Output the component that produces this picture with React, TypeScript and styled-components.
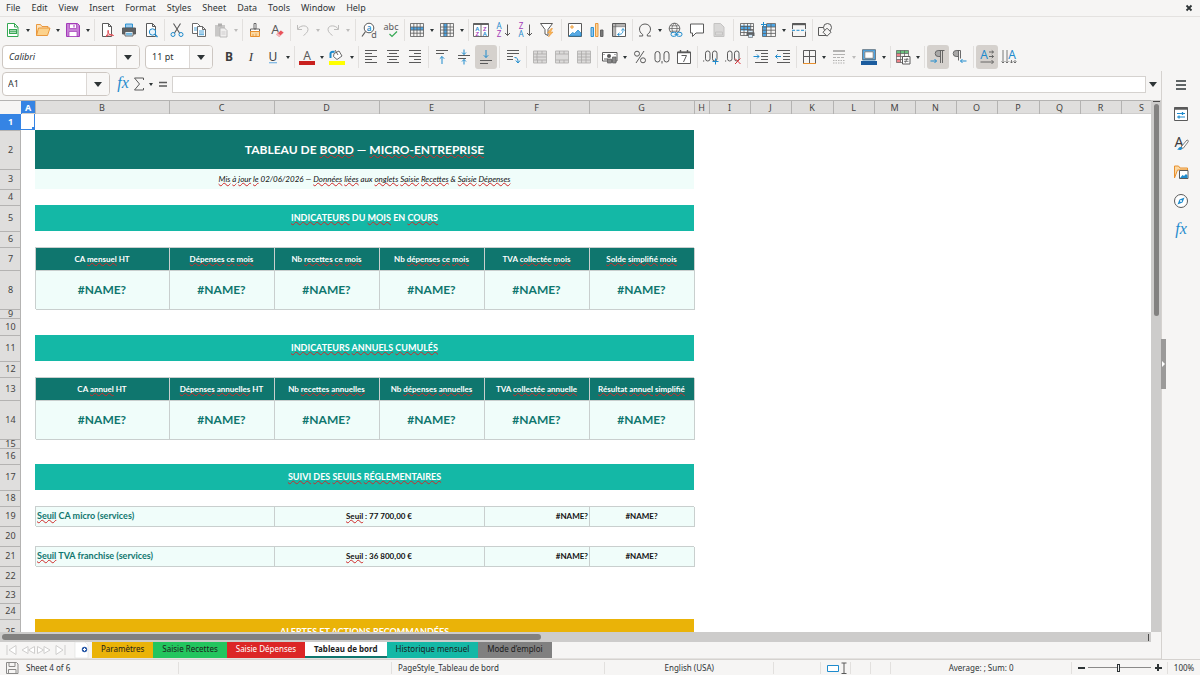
import React, { ReactNode } from "react";
import styled, { createGlobalStyle, css } from "styled-components";

const UI = `"Noto Sans", "Open Sans", sans-serif`;
const CELL = `Lato, "Noto Sans", sans-serif`;
const SERIF = `"Liberation Serif", serif`;

const c = {
  chrome: "#f6f5f4",
  line: "#d5d2cf",
  ink: "#2e3436",
  header: "#dfdedd",
  headerLine: "#b4b3b2",
  blue: "#3584e4",
  iconInk: "#5a5a5a",
  iconBlue: "#1e8bcd",
  teal: "#14b8a6",
  tealDark: "#0f766e",
  mint: "#f0fdfa",
  grid: "#c9cfce",
  amber: "#eab308",
};

const GlobalStyle = createGlobalStyle`
  *, *::before, *::after { box-sizing: border-box; }
  body { margin: 0; background: ${c.chrome}; color: ${c.ink}; font: 9px/12px ${UI}; }
  button, input, select { font: inherit; color: inherit; margin: 0; padding: 0; border: 0; background: none; border-radius: 0; }
  svg { display: block; flex: none; overflow: visible; }
`;

/* ---------- Icons ---------- */

const K = c.iconInk;
const B = c.iconBlue;
const P = "#a33ab8";
const O = "#e8902e";
const page = <path d="M3.5 1.5h6l3 3v10h-9zM9.5 1.5v3h3" fill="#fff" stroke={K} />;
const lines = (ys: number[], x1 = 2, x2 = 14, color = K) =>
  ys.map((y) => <path key={y} d={`M${x1} ${y}H${x2}`} stroke={color} />);
const glyph = (s: string, x: number, y: number, size: number, fill = K, weight = 400, family = UI, style = "normal") => (
  <text x={x} y={y} fontSize={size} fill={fill} fontWeight={weight} style={{ fontFamily: family, fontStyle: style }} textAnchor="middle">
    {s}
  </text>
);
const tableGrid = (
  <path d="M1.5 1.5h13v13h-13zM1.5 5h13M1.5 8h13M1.5 11.2h13M4.8 1.5v13M8 1.5v13M11.2 1.5v13" stroke={K} strokeWidth=".8" />
);
const mergeBase = <path d="M1.5 2h13v12h-13z" fill="#dcdbda" stroke="#b3b2b1" strokeWidth=".9" />;

const icons: Record<string, ReactNode> = {
  new: (
    <>
      <path d="M2.5 1.5h7L13 5v9.500H2.500z" fill="#fff" stroke="#35a853" />
      <path d="M9.500 1.500V5H13" stroke="#35a853" />
      <path d="M4 7h8v5H4z" fill="#35a853" />
      <path d="M5 8.700h6M5 10.400h6" stroke="#fff" strokeWidth=".7" />
    </>
  ),
  open: (
    <>
      <path d="M1.500 13.500v-11h4l1.500 2h6v2" fill="#fbe3bd" stroke={O} strokeWidth=".9" />
      <path d="M1.500 13.500L3.500 6H15l-2.500 7.500z" fill="#fcd28c" stroke={O} strokeWidth=".9" />
    </>
  ),
  save: (
    <>
      <path d="M1.500 1.500h11l2 2v11h-13z" fill="#c780d6" stroke={P} />
      <path d="M4.500 2h7v4.500h-7z" fill="#fff" stroke={P} strokeWidth=".7" />
      <path d="M4 9.500h8v5H4z" fill="#fff" stroke={P} strokeWidth=".7" />
      <path d="M9 3v2.500" stroke={P} />
    </>
  ),
  pdf: (
    <>
      {page}
      <path d="M7 14.500c1.500-2 3-4.500 2.300-6-.8-.6-.8 1.500.4 3 1.300 1.600 3.500 2.300 4.800 2-.6-1.200-4-1.500-7.500 1z" fill="#fff" stroke="#d9363e" strokeWidth=".9" />
    </>
  ),
  print: (
    <>
      <path d="M4.500 2h7v4h-7z" fill="#9ccbee" stroke={B} strokeWidth=".9" />
      <path d="M1.500 6h13v6h-13z" fill="#5d6164" stroke={K} />
      <path d="M4 9.500h8V14H4z" fill="#fff" stroke={K} strokeWidth=".9" />
      <path d="M5 11.300h6M5 12.800h6" stroke={B} strokeWidth=".8" />
    </>
  ),
  preview: (
    <>
      {page}
      <circle cx="9.500" cy="10" r="3.200" fill="#eaf4fb" stroke={B} />
      <path d="M12 12.500l2.500 2.500" stroke={B} strokeWidth="1.300" />
    </>
  ),
  cut: (
    <>
      <path d="M4.500 1.500l6 9.500M11.500 1.500l-6 9.500" stroke={K} strokeWidth="1.100" />
      <circle cx="4" cy="12.500" r="2" stroke={B} />
      <circle cx="12" cy="12.500" r="2" stroke={B} />
    </>
  ),
  copy: (
    <>
      <path d="M1.500 1.500h5l3 3v7h-8z" fill="#fff" stroke={K} strokeWidth=".9" />
      <path d="M3 6h4M3 8h4" stroke={B} strokeWidth=".8" />
      <path d="M6.500 4.500h5l3 3v7h-8zM11.500 4.500v3h3" fill="#fff" stroke={K} strokeWidth=".9" />
      <path d="M8 9h5M8 11h5M8 12.700h5" stroke={B} strokeWidth=".8" />
    </>
  ),
  paste: (
    <>
      <path d="M2 3h10v11.500H2z" fill="#c9c8c7" />
      <path d="M5 1.500h4v3H5z" fill="#b0afae" />
      <path d="M7 6h4.500L14 8.500V15H7z" fill="#f0efee" stroke="#b0afae" strokeWidth=".8" />
      <path d="M8.500 10h4M8.500 12h4" stroke="#c0bfbe" strokeWidth=".7" />
    </>
  ),
  brush: (
    <>
      <path d="M7 1.500h2V7H7zM3.500 7h9v2.500h-9z" fill="#fff" stroke={K} strokeWidth=".9" />
      <path d="M3.500 9.500h9v5h-9z" fill="#fbd9a4" stroke={O} />
      <path d="M6 12v2.500M9 11.500v3" stroke={O} strokeWidth=".8" />
    </>
  ),
  clear: (
    <>
      {glyph("A", 6.5, 12, 13)}
      <path d="M7 12.500l4.800-4.300 3.200 2.300-4.800 4.500z" fill="#e8525a" stroke="#f6f5f4" strokeWidth=".5" />
      <path d="M7 12.500l1.800-1.600 3.100 2.500-1.700 1.600z" fill="#f3b4b8" />
    </>
  ),
  undo: (
    <>
      <path d="M2.500 3v4.500H7" stroke="#bdbcbb" />
      <path d="M2.800 7C5 3 13 2.500 13 7.500c0 2.500-2.500 4.500-4.500 6" stroke="#bdbcbb" />
    </>
  ),
  redo: (
    <>
      <path d="M13.500 3v4.500H9" stroke="#bdbcbb" />
      <path d="M13.200 7C11 3 3 2.500 3 7.500c0 2.500 2.500 4.500 4.500 6" stroke="#bdbcbb" />
    </>
  ),
  find: (
    <>
      <circle cx="8" cy="6" r="4.800" fill="#fff" stroke={K} />
      <path d="M4.500 9.500L1 14.500" stroke={K} strokeWidth="1.200" />
      {glyph("a", 8, 8.5, 8, B, 600)}
      {glyph("d", 13, 15.5, 9)}
    </>
  ),
  spell: (
    <>
      {glyph("abc", 8, 7.5, 9)}
      <path d="M6.500 12l2.500 2.500 5-5" stroke="#35a853" strokeWidth="1.200" />
    </>
  ),
  rows: (
    <>
      <path d="M1.500 5h13v3.200h-13z" fill="#4da6e6" />
      {tableGrid}
    </>
  ),
  cols: (
    <>
      <path d="M4.800 1.500h3.400v13H4.800z" fill="#4da6e6" />
      {tableGrid}
    </>
  ),
  sort: (
    <>
      <path d="M.5 1.500h15v13H.5zM8 1.500v13" fill="#fff" stroke={K} strokeWidth=".9" />
      <path d="M.5 2.200h15" stroke={K} strokeWidth="1.500" />
      {glyph("A", 4.3, 8.6, 6, B, 600)}
      {glyph("Z", 4.3, 14, 6, P, 600)}
      {glyph("Z", 11.7, 8.6, 6, P, 600)}
      {glyph("A", 11.7, 14, 6, B, 600)}
    </>
  ),
  sortAz: (
    <>
      {glyph("A", 4, 7, 8, B)}
      {glyph("Z", 4, 15, 8, P)}
      <path d="M12.500 2.500v11M10 11l2.500 2.500L15 11" stroke={K} />
    </>
  ),
  sortZa: (
    <>
      {glyph("Z", 4, 7, 8, P)}
      {glyph("A", 4, 15, 8, B)}
      <path d="M12.500 2.500v11M10 11l2.500 2.500L15 11" stroke={K} />
    </>
  ),
  filter: (
    <>
      <path d="M1.500 1.500h12L9 7.500v6L6 12V7.500z" fill="#fff" stroke={K} />
      <path d="M12 6.500L8.500 11H11l-1.500 4L14 10h-2.500l2-3.500z" fill="#f7b65b" stroke={O} strokeWidth=".5" />
    </>
  ),
  image: (
    <>
      <path d="M1.500 1.500h13v13h-13z" fill="#fff" stroke={K} />
      <circle cx="5" cy="5" r="1.300" fill="#fbd08a" stroke={O} strokeWidth=".7" />
      <path d="M2 14l3.500-3.500 2 1L11 8l3 3v3z" fill="#5aaae4" stroke={B} strokeWidth=".7" />
    </>
  ),
  chart: (
    <>
      <path d="M2 5.500h2.500v9H2z" fill="#8ec5ee" stroke={B} strokeWidth=".9" />
      <path d="M6.500 1.500H9v13H6.500z" fill="#fbd59c" stroke={O} strokeWidth=".9" />
      <path d="M11.500 8H14v6.500h-2.500z" fill="#7a7a7a" stroke={K} strokeWidth=".9" />
    </>
  ),
  pivot: (
    <>
      <path d="M1.500 1.500h13v13h-13z" fill="#fff" stroke={K} />
      <path d="M2 2h12v2.500H2zM2 2h2.500v12H2z" fill="#b5b4b3" />
      <path d="M1.500 4.700h13M4.700 1.500v13" stroke={K} strokeWidth=".6" />
      <path d="M7 12.500c4.500 0 5-2 5-5M10.500 8.500l1.500-2 1.500 2M8.500 10.800l-2 1.700 2 1.500" stroke={B} strokeWidth=".9" />
    </>
  ),
  omega: <path d="M2 14h3.700v-1.500C3.300 11 2.500 9 2.500 7c0-3 2.500-5 5.500-5s5.500 2 5.500 5c0 2-.8 4-3.200 5.500V14H14" stroke={K} />,
  link: (
    <>
      <circle cx="7.500" cy="6.500" r="5.300" stroke={K} strokeWidth=".9" />
      <path d="M2.200 6.500h10.600M3.200 3.800h8.600M3.200 9.200h8.600M7.500 1.200c-3.400 3.300-3.400 7.500 0 10.600 3.400-3.100 3.400-7.300 0-10.600z" stroke={K} strokeWidth=".7" />
      <rect x="4" y="10.300" width="5.500" height="4" rx="2" fill={c.chrome} stroke={B} />
      <rect x="9.500" y="10.300" width="5.500" height="4" rx="2" fill={c.chrome} stroke={B} />
      <path d="M7.500 12.300h4" stroke={B} />
    </>
  ),
  comment: <path d="M1.500 2h13v9H7l-3.500 3.500V11h-2z" fill="#fff" stroke={K} />,
  headFoot: <path d="M3 1.500h6.500L13 5v9.500H3zM4.500 10h7v3h-7z" fill="#d9d8d7" stroke="#c4c3c2" />,
  printArea: (
    <>
      <path d="M1.500 3.500h10v5h-10z" fill="#4da6e6" />
      <path d="M1.500 1.500h13v12h-13zM1.500 4.500h13M1.500 7.500h13M1.500 10.500h13M5 1.500v12M8.500 1.500v12M11.700 1.500v12" stroke={K} strokeWidth=".8" />
      <path d="M7.500 10.500h8V14h-8z" fill="#5d6164" />
      <path d="M9 8.500h5v2H9zM9.500 12.500h4v3h-4z" fill="#cfe6f7" stroke={K} strokeWidth=".6" />
    </>
  ),
  freeze: (
    <>
      <path d="M1.500 4h4v10.500h-4zM5 2h9.500v3H5z" fill="#4da6e6" />
      <path d="M1.500 4v10.500h13v-13H6M5.500 1.500v13M1.500 5h13M1.500 8.200h13M1.500 11.400h13M10 1.500v13" stroke={K} strokeWidth=".8" />
      <path d="M2.500 0v5M0 2.500h5" stroke={B} />
    </>
  ),
  split: (
    <>
      <path d="M1.500 7V1.500h13V7M1.500 9.500v5h13v-5" stroke={K} />
      <path d="M1.500 2.200h13" stroke={K} strokeWidth="2" />
      <path d="M1 8.300h14" stroke={B} strokeDasharray="3 1.500" />
    </>
  ),
  shapes: (
    <>
      <path d="M1.500 5.500h8v8h-8z" fill={c.chrome} stroke={K} />
      <circle cx="10.500" cy="5.500" r="4" fill={c.chrome} stroke={K} />
      <path d="M10 6.200l4 4-4 4-4-4z" fill={c.chrome} stroke={K} />
    </>
  ),
  bold: glyph("B", 8, 12, 12, "#3d3d3d", 700),
  italic: glyph("I", 8, 12, 13, "#3d3d3d", 400, SERIF, "italic"),
  underline: (
    <>
      {glyph("U", 8, 12, 12, "#3d3d3d")}
      <path d="M4 13.700h8" stroke="#7ab6e4" strokeWidth="1.200" />
    </>
  ),
  fontColor: (
    <>
      {glyph("A", 8, 10.5, 12)}
      <path d="M0 12h16v4H0z" fill="#c9211e" />
    </>
  ),
  fill: (
    <>
      <path d="M5 4.500L10 2l3 5-5 3.500-3.500-3zM6 1l3 5" stroke={K} fill="#fff" strokeWidth=".9" />
      <path d="M1.500 9V4.500c0-1.500 2-2 4-1.500" stroke={B} strokeWidth="2" />
      <path d="M0 12h16v4H0z" fill="#ffff00" />
    </>
  ),
  alignL: (
    <>
      {lines([1.5, 7.5, 13.5])}
      {lines([4.5, 10.5], 2, 9)}
    </>
  ),
  alignC: (
    <>
      {lines([1.5, 7.5, 13.5])}
      {lines([4.5, 10.5], 4, 12)}
    </>
  ),
  alignR: (
    <>
      {lines([1.5, 7.5, 13.5])}
      {lines([4.5, 10.5], 7, 14)}
    </>
  ),
  top: (
    <>
      {lines([1.5])}
      {lines([4.5], 2, 10)}
      <path d="M8 15V7.500M5.800 9.700L8 7.500l2.200 2.200" stroke={B} />
    </>
  ),
  middle: (
    <>
      {lines([6.5])}
      {lines([9.5], 2, 10)}
      <path d="M8 .5v5M6 3.500l2 2 2-2M8 15.500v-5M6 12.500l2-2 2 2" stroke={B} />
    </>
  ),
  bottom: (
    <>
      {lines([11.5])}
      {lines([14.5], 2, 10)}
      <path d="M8 1v7.500M5.800 6.300L8 8.500l2.200-2.200" stroke={B} />
    </>
  ),
  wrap: (
    <>
      {lines([1.5, 4.5])}
      {lines([7.5, 10.5], 2, 8)}
      <path d="M9.500 8.500c3 0 3.500 1.500 3.500 5M10.800 11.500l2.200 2.500 2-2.500" stroke={B} />
    </>
  ),
  merge1: (
    <>
      {mergeBase}
      <path d="M1.500 5h13M1.500 11h13M1.500 8h13M5.500 2v3M10 2v3M5.500 11v3M10 11v3M5 5v6" stroke="#a9a8a7" strokeWidth=".8" />
    </>
  ),
  merge2: (
    <>
      {mergeBase}
      <path d="M1.500 5h13M1.500 11h13M5.500 2v3M10 2v3M5.500 11v3M10 11v3" stroke="#a9a8a7" strokeWidth=".8" />
    </>
  ),
  merge3: (
    <>
      {mergeBase}
      <path d="M1.500 5h13M1.500 11h13M5.500 2v12M10 2v12M1.500 8h13" stroke="#a9a8a7" strokeWidth=".8" />
    </>
  ),
  currency: (
    <>
      <path d="M.5 3.500h14.500V12H.5z" fill="#fff" stroke={K} />
      <circle cx="7" cy="7" r="2" fill={K} />
      <path d="M2 5v1M13 5v1M2 10h4" stroke={K} />
      <path d="M5.500 10h4v4h-4zM10.500 8H14v6h-3.500z" fill="#8a8a8a" stroke={K} strokeWidth=".7" />
    </>
  ),
  percent: (
    <>
      <circle cx="5" cy="4.700" r="2.500" stroke={K} />
      <circle cx="11" cy="11.300" r="2.500" stroke={K} />
      <path d="M12 2L4 14" stroke={K} />
    </>
  ),
  number: (
    <>
      <rect x="1" y="2.500" width="5" height="10.500" rx="2.500" stroke={K} />
      <rect x="10" y="2.500" width="5" height="10.500" rx="2.500" stroke={K} />
      <path d="M8 12v2.500" stroke={K} />
    </>
  ),
  date: (
    <>
      <path d="M1.500 3h13v11.500h-13z" fill="#fff" stroke={K} />
      <path d="M1.500 3.500h13M4.500 1v2.500M11.500 1v2.500" stroke={K} strokeWidth="1.400" />
      <path d="M5.500 6.500h5L7.500 13" stroke={K} />
    </>
  ),
  addDec: (
    <>
      <rect x="2.500" y="2" width="4.500" height="10" rx="2.200" stroke={K} />
      <rect x="9.500" y="2" width="4.500" height="10" rx="2.200" stroke={K} />
      <path d="M0 12h1.200" stroke={K} />
      <path d="M12.500 9.500v6M9.500 12.500h6" stroke={B} />
    </>
  ),
  delDec: (
    <>
      <rect x="2.500" y="2" width="4.500" height="10" rx="2.200" stroke={K} />
      <rect x="9.500" y="2" width="4.500" height="10" rx="2.200" stroke={K} />
      <path d="M0 12h1.200" stroke={K} />
      <path d="M10 9.500l5.500 5.500M15.500 9.500L10 15" stroke="#d9363e" />
    </>
  ),
  indent: (
    <>
      {lines([1.5, 13.5], 2, 15)}
      {lines([4.5, 7.5, 10.5], 8, 15)}
      <path d="M.5 7.500H6M4 5.500l2 2-2 2" stroke={B} />
    </>
  ),
  outdent: (
    <>
      {lines([1.5, 13.5], 2, 15)}
      {lines([4.5, 7.5, 10.5], 8, 15)}
      <path d="M.5 7.500H6M2.500 5.500l-2 2 2 2" stroke={B} />
    </>
  ),
  borders: (
    <>
      <path d="M2.500 14V1.500h12V14M8.500 1.500V14M2.500 7.500h12" stroke={K} />
      <path d="M2 14.500h13" stroke={O} />
    </>
  ),
  lineStyle: (
    <>
      <path d="M2 2h12" stroke="#b3b2b1" strokeWidth="2" />
      <path d="M2 5.500h12" stroke="#b3b2b1" />
      <path d="M2 8.500h12" stroke="#b3b2b1" strokeDasharray="3 1" />
      <path d="M2 11.500h12M2 14h12" stroke="#b3b2b1" strokeDasharray="1.500 1" />
    </>
  ),
  lineColor: (
    <>
      <path d="M2.500 1.500h11v9h-11z" fill="#fff" stroke="#4da6e6" strokeWidth="2" />
      <path d="M3.800 2.800h8.400v6.500H3.800zM1.500.7h13v10h-13z" stroke={K} strokeWidth=".7" />
      <path d="M0 12h16v4H0z" fill="#1b5c9e" />
    </>
  ),
  conditional: (
    <>
      <path d="M1.500 1.500h12v3h-12z" fill="#6cc07f" />
      <path d="M1.500 4.500h4v3h-4zM1.500 10.500h4v3h-4z" fill="#ee8288" />
      <path d="M1.500 1.500h12v12h-12zM1.500 4.500h12M1.500 7.500h12M1.500 10.500h12M5.500 1.500v12M9.500 1.500v12" stroke={K} strokeWidth=".7" />
      <path d="M7.500 7.500H15V15H7.500z" fill="#fff" stroke={K} />
      <path d="M9 10.300h4.500M9 12.300h4.500M12.300 9l-2 4.700" stroke={K} strokeWidth=".8" />
    </>
  ),
  ltr: (
    <>
      <path d="M8.500 1.800H10v5.500H8a2.700 2.700 0 01.5-5.500z" fill="#a9a8a7" />
      <path d="M14.500 1.500H8.200a3 3 0 000 6H10M10.500 1.500V14M12.500 1.500V14" stroke={K} strokeWidth=".9" />
      <path d="M.5 12h6M4.500 10l2 2-2 2" stroke={B} />
    </>
  ),
  rtl: (
    <>
      <path d="M4.500 1.800H6v5.500H4a2.700 2.700 0 01.5-5.500z" fill="#a9a8a7" />
      <path d="M8.500 1.500H4.200a3 3 0 000 6H6M6.500 1.500v10M8.500 1.500v8" stroke={K} strokeWidth=".9" />
      <path d="M14.500 12h-6M10.500 10l-2 2 2 2" stroke={B} />
    </>
  ),
  textLr: (
    <>
      {glyph("A", 5, 9.5, 12, B)}
      <path d="M10 3h4.500M10 7.500h4.500M1.500 13h13M12.800 1.500L14.500 3l-1.700 1.500M12.800 6l1.700 1.500L12.800 9M12.500 11l2 2-2 2" stroke={K} strokeWidth=".9" />
    </>
  ),
  textTb: (
    <>
      {glyph("A", 11, 9.5, 12, B)}
      <path d="M2 1v13M6 1v13M10.500 11v3M14 11v3M.5 12.500L2 14l1.500-1.500M4.500 12.500L6 14l1.500-1.500M9 12.500l1.500 1.500 1.500-1.500M12.500 12.500L14 14l1.500-1.500" stroke={K} strokeWidth=".8" />
    </>
  ),
  fx: glyph("fx", 8, 12, 16, B, 400, SERIF, "italic"),
  sigma: <path d="M12.500 4V2h-9l5 6-5 6h9v-2" stroke={K} />,
  equals: <path d="M4 6.500h8M4 10h8" stroke={K} strokeWidth="1.500" />,
  menu: <path d="M3 4h10M3 8h10M3 12h10" stroke={c.ink} strokeWidth="1.500" />,
  properties: (
    <>
      <path d="M1.500 1.500h13v13h-13z" fill="#fff" stroke={K} />
      <path d="M1.500 2.500h13" stroke={K} strokeWidth="2.500" />
      <path d="M4 7.500h8M4 11h8" stroke={B} />
      <path d="M9.500 6v3M6 9.500v3" stroke={B} strokeWidth="1.300" />
    </>
  ),
  styles: (
    <>
      {glyph("A", 6, 11.5, 14, "#3d3d3d")}
      <path d="M8 12l6-7c1.500.2 1.500 1 1 2l-5 6.500z" fill="#fff" stroke={K} strokeWidth=".8" />
      <path d="M4 14.500c1.500-.5 2-3 4-2.500s1.500 3-1 3z" fill={B} />
    </>
  ),
  gallery: (
    <>
      <path d="M1.500 14V2h4L7 4h7.500v2h-10z" fill="#fbd9a4" stroke={O} />
      <path d="M6.500 6.500H15v8H6.500z" fill="#fff" stroke={K} />
      <path d="M7 14l2.500-3 1.500 1 2-2 1.500 1.500V14z" fill={B} />
    </>
  ),
  navigator: (
    <>
      <circle cx="8" cy="8" r="6.500" fill="#fff" stroke={K} />
      <path d="M11.500 4.500l-2 5-5 2 2-5z" fill={B} />
      <circle cx="8" cy="8" r="1" fill="#fff" />
    </>
  ),
  disk: <path d="M2.500 2.500h10L14 4v9.500H2.500zM5 2.500v4h6v-4M4.500 13.500v-4H12v4" stroke="#8b8a89" />,
  selection: <path d="M7.500 5.500h11v6h-11z" fill="#fff" stroke={B} />,
  ibeam: <path d="M5.500 3h5M5.500 13.500h5M8 3v10.500" stroke={K} />,
  close: <path d="M5.500 5.500l5 5M10.500 5.500l-5 5" stroke={c.ink} strokeWidth="1.800" />,
  first: <path d="M3 3v10M12 3.500L5 8l7 4.500z" stroke="#cfcecd" fill="#fff" />,
  prev: <path d="M8 4.500L2 8l6 3.500zM14.500 4.500l-6 3.500 6 3.500z" stroke="#cfcecd" fill="#fff" />,
  next: <path d="M8 4.500L14 8l-6 3.500zM1.500 4.500l6 3.500-6 3.500z" stroke="#cfcecd" fill="#fff" />,
  last: <path d="M13 3v10M4 3.500L11 8l-7 4.500z" stroke="#cfcecd" fill="#fff" />,
  addSheet: (
    <>
      <path d="M0 0h10l3 3v13H0z" fill="#fff" stroke="#dedddc" strokeWidth=".6" />
      <circle cx="9.500" cy="7.500" r="2.700" fill="#2a5aa8" />
      <path d="M9.500 6v3M8 7.500h3" stroke="#fff" />
    </>
  ),
};

const Icon = ({ name }: { name: string }) => (
  <svg width="16" height="16" viewBox="0 0 16 16" fill="none" aria-hidden="true">
    {icons[name]}
  </svg>
);

const Caret = styled.span<{ $size?: number; $dim?: boolean }>`
  width: 0;
  height: 0;
  border: ${(p) => p.$size ?? 2}px solid transparent;
  border-top: ${(p) => (p.$size ?? 2) + 1}px solid ${(p) => (p.$dim ? "#bdbcbb" : c.ink)};
  border-bottom: 0;
`;

/* ---------- Window chrome ---------- */

const Window = styled.div`
  display: flex;
  flex-direction: column;
  height: 100vh;
  overflow: hidden;
`;

const MenuBar = styled.nav`
  display: flex;
  align-items: center;
  gap: 11px;
  height: 17px;
  padding: 0 3px 0 6px;
  border-bottom: 1px solid #e4e2e0;
`;

const MenuItem = styled.button`
  line-height: 12px;
`;

const CloseButton = styled.button`
  margin-left: auto;
`;

const Toolbar = styled.div`
  display: flex;
  align-items: center;
  height: 27px;
  padding: 0 0 1px 2px;
`;

const ToolButton = styled.button<{ $active?: boolean }>`
  display: flex;
  align-items: center;
  justify-content: center;
  flex: none;
  width: 22px;
  height: 24px;
  border-radius: 3px;
  background: ${(p) => (p.$active ? "#d5d1cd" : "none")};
`;

const ArrowButton = styled.button`
  display: flex;
  align-items: center;
  justify-content: center;
  flex: none;
  width: 8px;
  height: 24px;
`;

const Divider = styled.span<{ $width: number }>`
  flex: none;
  width: ${(p) => p.$width}px;
  height: 22px;
  background: linear-gradient(#e2e0de, #e2e0de) center / 1px 100% no-repeat;
`;

const Combo = styled.div<{ $width: number }>`
  display: flex;
  flex: none;
  width: ${(p) => p.$width}px;
  height: 24px;
  margin-right: 5px;
  background: #fff;
  border: 1px solid #cdc7c2;
  border-radius: 4px;
  overflow: hidden;
`;

const ComboSelect = styled.select<{ $italic?: boolean }>`
  flex: 1;
  min-width: 0;
  padding-left: 6px;
  appearance: none;
  font-style: ${(p) => (p.$italic ? "italic" : "normal")};
`;

const ComboInput = styled.input`
  flex: 1;
  min-width: 0;
  padding-left: 5px;
`;

const ComboArrow = styled.span`
  display: flex;
  align-items: center;
  justify-content: center;
  width: 23px;
  background: #f8f7f6;
  border-left: 1px solid #dcd8d5;
  pointer-events: none;
`;

const Workspace = styled.div`
  display: flex;
  flex: 1;
  min-height: 0;
`;

const Main = styled.main`
  display: flex;
  flex-direction: column;
  flex: 1;
  min-width: 0;
`;

const FormulaBar = styled.div`
  display: flex;
  align-items: center;
  height: 26px;
  margin-bottom: 3px;
  padding-left: 2px;
`;

const FormulaButton = styled.button`
  display: flex;
  justify-content: center;
  width: 16px;
`;

const FormulaInput = styled.input`
  flex: 1;
  min-width: 0;
  height: 17px;
  margin-left: 1px;
  background: #fff;
  border: 1px solid #d5d2cf;
`;

const ExpandButton = styled.button`
  display: flex;
  justify-content: center;
  width: 13px;
  margin-right: 2px;
`;

const Sidebar = styled.aside`
  display: flex;
  flex-direction: column;
  align-items: center;
  gap: 5px;
  flex: none;
  width: 39px;
  padding-top: 2px;
  border-left: 1px solid ${c.line};
  position: relative;
`;

const SidebarGrip = styled.span`
  position: absolute;
  left: -1px;
  top: 50%;
  width: 5px;
  height: 50px;
  margin-top: -26px;
  display: flex;
  align-items: center;
  justify-content: center;
  background: #9b9a99;
  &::after {
    content: "";
    border: 3px solid transparent;
    border-left-color: #fff;
    border-right: 0;
  }
`;

/* ---------- Sheet ---------- */

const SheetArea = styled.div`
  display: grid;
  grid-template-columns: 1fr 10px;
  grid-template-rows: 1fr 10px;
  flex: 1;
  min-height: 0;
`;

const SheetView = styled.div`
  overflow: hidden;
  background: linear-gradient(90deg, ${c.header} 21px, #fff 21px);
  border-top: 1px solid ${c.headerLine};
`;

const Grid = styled.table`
  table-layout: fixed;
  width: 100%;
  min-width: 1162px;
  border-spacing: 0;
`;

const heading = css<{ $active?: boolean }>`
  padding: 0;
  font-size: 9px;
  line-height: 8px;
  font-weight: ${(p) => (p.$active ? 700 : 400)};
  color: ${(p) => (p.$active ? "#fff" : "#454443")};
  background: ${(p) => (p.$active ? c.blue : c.header)};
`;

const ColHead = styled.th<{ $active?: boolean }>`
  ${heading}
  height: 13px;
  box-shadow: inset 1px 0 0 ${(p) => (p.$active ? c.blue : c.headerLine)}, inset 0 -1px 0 #cfcecd;
`;

const Corner = styled.td`
  padding: 0;
  background: ${c.chrome};
`;

const RowHead = styled.th<{ $active?: boolean }>`
  ${heading}
  vertical-align: middle;
  box-shadow: inset 0 1px 0 ${(p) => (p.$active ? c.blue : c.headerLine)}, inset -1px 0 0 ${(p) => (p.$active ? c.blue : c.headerLine)};
`;

type CellKind = "blank" | "title" | "subtitle" | "band" | "alert" | "label" | "value" | "name" | "amount" | "right" | "cursor";

const outlined = css`
  box-shadow: inset 1px 1px 0 ${c.grid}, 1px 1px 0 ${c.grid};
`;

const bandText = css`
  color: #fff;
  font-size: 9px;
  font-weight: 700;
`;

const cellKinds: Record<CellKind, ReturnType<typeof css>> = {
  blank: css``,
  cursor: css`
    box-shadow: inset -1px -1px 0 ${c.blue};
    background: linear-gradient(${c.blue}, ${c.blue}) right bottom / 3px 3px no-repeat;
  `,
  title: css`
    background: ${c.tealDark};
    color: #fff;
    font-size: 12px;
    font-weight: 700;
  `,
  subtitle: css`
    background: ${c.mint};
    font-style: italic;
  `,
  band: css`
    ${bandText}
    background: ${c.teal};
  `,
  alert: css`
    ${bandText}
    background: ${c.amber};
  `,
  label: css`
    ${outlined}
    background: ${c.tealDark};
    color: #fff;
    font-weight: 700;
  `,
  value: css`
    ${outlined}
    background: ${c.mint};
    color: ${c.tealDark};
    font-size: 12px;
    font-weight: 700;
  `,
  name: css`
    ${outlined}
    padding-left: 2px;
    background: ${c.mint};
    color: ${c.tealDark};
    font-size: 9px;
    font-weight: 700;
    text-align: left;
  `,
  amount: css`
    ${outlined}
    background: ${c.mint};
    font-weight: 700;
  `,
  right: css`
    ${outlined}
    padding-right: 1px;
    background: ${c.mint};
    font-weight: 700;
    text-align: right;
  `,
};

const Cell = styled.td<{ $kind: CellKind }>`
  padding: 0;
  color: #111;
  font-family: ${CELL};
  font-size: 8px;
  line-height: 8px;
  text-align: center;
  vertical-align: middle;
  white-space: nowrap;
  ${(p) => cellKinds[p.$kind]}
`;

const Misspelt = styled.span`
  text-decoration: underline wavy #d02a2a 1px;
  text-decoration-skip-ink: none;
  text-underline-offset: 0;
`;

/* Words between tildes carry the spell checker's wavy underline. */
const spell = (text: string) =>
  text.split("~").map((part, i) => (i % 2 ? <Misspelt key={i}>{part}</Misspelt> : part));

type CellData = { kind: CellKind; text: string; span?: number };
type RowData = { height: number; cells?: CellData[] };

const full = (kind: CellKind, text: string): CellData[] => [{ kind, text, span: 6 }];
const each = (kind: CellKind, texts: string[]): CellData[] => texts.map((text) => ({ kind, text }));
const names = each("value", Array(6).fill("#NAME?"));
const threshold = (label: string, amount: string): CellData[] => [
  { kind: "name", text: label, span: 2 },
  { kind: "amount", text: amount, span: 2 },
  { kind: "right", text: "#NAME?" },
  { kind: "amount", text: "#NAME?" },
];

const rows: RowData[] = [
  { height: 16 },
  { height: 39, cells: full("title", "TABLEAU DE ~BORD~ — ~MICRO-ENTREPRISE~") },
  {
    height: 20,
    cells: full("subtitle", "~Mis~ ~à~ ~jour~ ~le~ 02/06/2026 — ~Données~ ~liées~ aux ~onglets~ ~Saisie~ ~Recettes~ & ~Saisie~ ~Dépenses~"),
  },
  { height: 16 },
  { height: 26, cells: full("band", "~INDICATEURS~ DU ~MOIS~ EN ~COURS~") },
  { height: 16 },
  {
    height: 23,
    cells: each("label", [
      "CA ~mensuel~ HT",
      "~Dépenses~ ~ce~ ~mois~",
      "Nb ~recettes~ ~ce~ ~mois~",
      "Nb ~dépenses~ ~ce~ ~mois~",
      "TVA ~collectée~ ~mois~",
      "~Solde~ ~simplifié~ ~mois~",
    ]),
  },
  { height: 39, cells: names },
  { height: 9 },
  { height: 17 },
  { height: 26, cells: full("band", "~INDICATEURS~ ~ANNUELS~ ~CUMULÉS~") },
  { height: 16 },
  {
    height: 23,
    cells: each("label", [
      "CA ~annuel~ HT",
      "~Dépenses~ ~annuelles~ HT",
      "Nb ~recettes~ ~annuelles~",
      "Nb ~dépenses~ ~annuelles~",
      "TVA ~collectée~ ~annuelle~",
      "~Résultat~ ~annuel~ ~simplifié~",
    ]),
  },
  { height: 39, cells: names },
  { height: 9 },
  { height: 16 },
  { height: 26, cells: full("band", "~SUIVI~ ~DES~ ~SEUILS~ ~RÉGLEMENTAIRES~") },
  { height: 16 },
  { height: 20, cells: threshold("~Seuil~ CA micro (services)", "~Seuil~ : 77 700,00 €") },
  { height: 20 },
  { height: 20, cells: threshold("~Seuil~ TVA franchise (services)", "~Seuil~ : 36 800,00 €") },
  { height: 20 },
  { height: 17 },
  { height: 16 },
  { height: 26, cells: full("alert", "~ALERTES~ ET ACTIONS ~RECOMMANDÉES~") },
];

const columns: [string, number][] = [
  ["A", 14], ["B", 134], ["C", 105], ["D", 105], ["E", 105], ["F", 105], ["G", 105], ["H", 15],
  ["I", 41], ["J", 41], ["K", 42], ["L", 41], ["M", 41], ["N", 41], ["O", 41], ["P", 42], ["Q", 41],
  ["R", 41], ["S", 41],
];

const Track = styled.div<{ $vertical?: boolean }>`
  display: flex;
  flex-direction: ${(p) => (p.$vertical ? "column" : "row")};
  align-items: center;
  padding: ${(p) => (p.$vertical ? "1px 0 0" : "0 2px")};
  background: #cdcccb;
`;

const Thumb = styled.span<{ $vertical?: boolean }>`
  flex: none;
  border-radius: 3px;
  background: #828180;
  ${(p) => (p.$vertical ? "width: 5px; height: 40%; margin-top: 2px;" : "height: 6px; width: 47%;")}
`;

const SplitMark = styled.span<{ $vertical?: boolean }>`
  flex: none;
  background: #4c4b4a;
  ${(p) => (p.$vertical ? "width: 7px; height: 1px;" : "width: 1px; height: 7px; margin-left: auto;")}
`;

const TabBar = styled.div`
  display: flex;
  height: 17px;
  padding-left: 4px;
  border-bottom: 1px solid #e4e2e0;
`;

const NavButton = styled.button`
  width: 16px;
`;

const AddButton = styled.button`
  width: 17px;
  margin: 0 0 0 7px;
`;

const Tab = styled.button<{ $bg: string; $light?: boolean; $active?: boolean }>`
  height: 16px;
  padding: 0 9px;
  line-height: 14px;
  font-size: 8px;
  background: ${(p) => p.$bg};
  color: ${(p) => (p.$light ? "#fff" : "#1b1b1b")};
  font-weight: ${(p) => (p.$active ? 700 : 400)};
  border-bottom: 2px solid ${(p) => (p.$active ? c.tealDark : p.$bg)};
`;

const StatusBar = styled.footer`
  display: flex;
  align-items: center;
  height: 16px;
  padding-left: 4px;
  border-top: 1px solid ${c.line};
  font-size: 8px;
  white-space: nowrap;
`;

const StatusCell = styled.div<{ $width?: number; $grow?: number; $align?: string }>`
  display: flex;
  align-items: center;
  justify-content: ${(p) => p.$align ?? "center"};
  flex: ${(p) => (p.$grow ? `${p.$grow} 0 0` : "none")};
  width: ${(p) => (p.$width ? `${p.$width}px` : "auto")};
  height: 12px;
  padding: 0 6px;
  border-right: 1px solid #e2e0de;
`;

const Zoom = styled.div`
  display: flex;
  align-items: center;
  gap: 3px;
  flex: none;
  width: 96px;
  height: 12px;
  padding: 0 5px;
  border-right: 1px solid #e2e0de;
`;

const ZoomButton = styled.button<{ $plus?: boolean }>`
  flex: none;
  width: 8px;
  height: 8px;
  background:
    linear-gradient(${c.ink}, ${c.ink}) center / 7px 2px no-repeat
    ${(p) => (p.$plus ? `, linear-gradient(${c.ink}, ${c.ink}) center / 2px 7px no-repeat` : "")};
`;

const ZoomSlider = styled.input`
  flex: 1;
  min-width: 0;
  height: 8px;
  appearance: none;
  background: linear-gradient(#8b8a89, #8b8a89) center / 100% 1px no-repeat;
  &::-webkit-slider-thumb {
    appearance: none;
    width: 3px;
    height: 8px;
    background: ${c.chrome};
    border: 1px solid ${c.ink};
  }
`;

const ZoomLevel = styled.button`
  flex: none;
  width: 32px;
  text-align: center;
`;

const menus = ["File", "Edit", "View", "Insert", "Format", "Styles", "Sheet", "Data", "Tools", "Window", "Help"];

/* Tool names; "+" adds a drop-down arrow, "-" a dimmed one, "*" marks a pressed tool, a number is a divider width. */
const standardTools: (string | number)[] = [
  "new+", "open+", "save+", 4, "pdf", "print", "preview", 4, "cut", "copy", "paste-", 4, "brush", "clear", 4,
  "undo-", "redo-", 6, "find", "spell", 4, "rows+", "cols+", 4, "sort", "sortAz", "sortZa", "filter", 6,
  "image", "chart", "pivot", 4, "omega+", "link", "comment", "headFoot", 6, "printArea", "freeze+", "split", 4, "shapes",
];
const formatTools: (string | number)[] = [
  "bold", "italic", "underline+", 4, "fontColor+", "fill+", 4, "alignL", "alignC", "alignR", 5,
  "top", "middle", "bottom*", 5, "wrap", 5, "merge1", "merge2", "merge3", 4, "currency+", "percent", "number", "date", 5,
  "addDec", "delDec", 6, "indent", "outdent", 4, "borders+", "lineStyle-", "lineColor+", 4, "conditional+", 5,
  "ltr*", "rtl", 5, "textLr*", "textTb",
];

const Tools = ({ items }: { items: (string | number)[] }) => (
  <>
    {items.map((item, i) => {
      if (typeof item === "number") return <Divider key={i} $width={item} />;
      const name = item.replace(/[-+*]$/, "");
      const mark = item.slice(name.length);
      return (
        <React.Fragment key={i}>
          <ToolButton aria-label={name} $active={mark === "*"}>
            <Icon name={name} />
          </ToolButton>
          {(mark === "+" || mark === "-") && (
            <ArrowButton aria-label={`${name} options`}>
              <Caret $dim={mark === "-"} />
            </ArrowButton>
          )}
        </React.Fragment>
      );
    })}
  </>
);

const Sheet = () => (
  <Grid>
    <colgroup>
      <col style={{ width: 21 }} />
      {columns.map(([name, width]) => (
        <col key={name} style={{ width }} />
      ))}
      <col />
    </colgroup>
    <thead>
      <tr>
        <Corner />
        {columns.map(([name]) => (
          <ColHead key={name} scope="col" $active={name === "A"}>
            {name}
          </ColHead>
        ))}
        <ColHead aria-hidden="true" />
      </tr>
    </thead>
    <tbody>
      {rows.map((row, i) => (
        <tr key={i} style={{ height: row.height }}>
          <RowHead scope="row" $active={i === 0}>
            {i + 1}
          </RowHead>
          <Cell $kind={i === 0 ? "cursor" : "blank"} />
          {row.cells ? (
            row.cells.map((cell, j) => (
              <Cell key={j} $kind={cell.kind} colSpan={cell.span}>
                {spell(cell.text)}
              </Cell>
            ))
          ) : (
            <Cell $kind="blank" colSpan={6} />
          )}
          <Cell $kind="blank" colSpan={13} />
        </tr>
      ))}
    </tbody>
  </Grid>
);

export default function App() {
  return (
    <Window>
      <GlobalStyle />
      <MenuBar>
        {menus.map((m) => (
          <MenuItem key={m}>{m}</MenuItem>
        ))}
        <CloseButton aria-label="Close document">
          <Icon name="close" />
        </CloseButton>
      </MenuBar>
      <Toolbar>
        <Tools items={standardTools} />
      </Toolbar>
      <Toolbar>
        <Combo $width={138}>
          <ComboSelect aria-label="Font name" $italic>
            <option>Calibri</option>
          </ComboSelect>
          <ComboArrow>
            <Caret $size={4} />
          </ComboArrow>
        </Combo>
        <Combo $width={68}>
          <ComboSelect aria-label="Font size">
            <option>11 pt</option>
          </ComboSelect>
          <ComboArrow>
            <Caret $size={4} />
          </ComboArrow>
        </Combo>
        <Tools items={formatTools} />
      </Toolbar>
      <Workspace>
        <Main>
          <FormulaBar>
            <Combo $width={108}>
              <ComboInput aria-label="Name box" defaultValue="A1" />
              <ComboArrow>
                <Caret $size={4} />
              </ComboArrow>
            </Combo>
            <FormulaButton aria-label="Function wizard">
              <Icon name="fx" />
            </FormulaButton>
            <FormulaButton aria-label="Select function">
              <Icon name="sigma" />
            </FormulaButton>
            <ArrowButton aria-label="Select function options">
              <Caret />
            </ArrowButton>
            <FormulaButton aria-label="Formula">
              <Icon name="equals" />
            </FormulaButton>
            <FormulaInput aria-label="Input line" />
            <ExpandButton aria-label="Expand formula bar">
              <Caret $size={4} />
            </ExpandButton>
          </FormulaBar>
          <SheetArea>
            <SheetView>
              <Sheet />
            </SheetView>
            <Track $vertical>
              <SplitMark $vertical />
              <Thumb $vertical />
            </Track>
            <Track>
              <Thumb />
              <SplitMark />
            </Track>
          </SheetArea>
          <TabBar>
            {["first", "prev", "next", "last"].map((n) => (
              <NavButton key={n} aria-label={`${n} sheet`}>
                <Icon name={n} />
              </NavButton>
            ))}
            <AddButton aria-label="Add sheet">
              <Icon name="addSheet" />
            </AddButton>
            <Tab $bg="#eab308">Paramètres</Tab>
            <Tab $bg="#22c55e">Saisie Recettes</Tab>
            <Tab $bg="#dc2626" $light>Saisie Dépenses</Tab>
            <Tab $bg="#ffffff" $active>Tableau de bord</Tab>
            <Tab $bg="#14b8a6">Historique mensuel</Tab>
            <Tab $bg="#808080">Mode d’emploi</Tab>
          </TabBar>
        </Main>
        <Sidebar>
          {["menu", "properties", "styles", "gallery", "navigator", "fx"].map((n) => (
            <ToolButton key={n} aria-label={n}>
              <Icon name={n} />
            </ToolButton>
          ))}
          <SidebarGrip />
        </Sidebar>
      </Workspace>
      <StatusBar>
        <Icon name="disk" />
        <StatusCell $grow={157} $align="flex-start">Sheet 4 of 6</StatusCell>
        <StatusCell $grow={216} />
        <StatusCell $grow={216} $align="flex-start">PageStyle_Tableau de bord</StatusCell>
        <StatusCell $grow={168}>English (USA)</StatusCell>
        <StatusCell $width={47} />
        <StatusCell $width={30}>
          <Icon name="selection" />
          <Icon name="ibeam" />
        </StatusCell>
        <StatusCell $width={20} />
        <StatusCell $width={20} />
        <StatusCell $grow={181}>Average: ; Sum: 0</StatusCell>
        <Zoom>
          <ZoomButton aria-label="Zoom out" />
          <ZoomSlider type="range" aria-label="Zoom" defaultValue={48} />
          <ZoomButton aria-label="Zoom in" $plus />
        </Zoom>
        <ZoomLevel>100%</ZoomLevel>
      </StatusBar>
    </Window>
  );
}
